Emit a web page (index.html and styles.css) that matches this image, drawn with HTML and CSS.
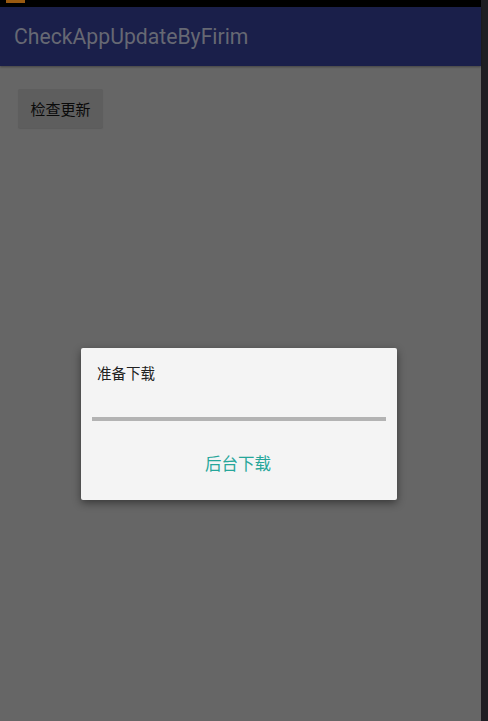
FILE: index.html
```html
<!DOCTYPE html>
<html>
<head>
<meta charset="utf-8">
<link rel="stylesheet" href="styles.css">
</head>
<body>
<div class="screen">
  <div class="app">
    <div class="statusbar"><span class="notif"></span></div>
    <div class="toolbar"><span class="title">CheckAppUpdateByFirim</span></div>
    <div class="content">
      <button class="btn">检查更新</button>
    </div>
    <div class="dialog">
      <div class="dlg-title">准备下载</div>
      <div class="progress"></div>
      <div class="dlg-actions"><span class="action">后台下载</span></div>
    </div>
  </div>
  <div class="edge"></div>
</div>
</body>
</html>
```
FILE: styles.css
```css
html, body { margin: 0; padding: 0; }
body { width: 488px; height: 721px; overflow: hidden; font-family: Roboto, "Noto Sans CJK SC", sans-serif; }
.screen { display: flex; width: 488px; height: 721px; }
.app { position: relative; flex: 1; background: #666666; display: flex; flex-direction: column; }
.edge { width: 7px; background: #1f1e23; }
.statusbar { height: 7px; background: #000; position: relative; }
.notif { position: absolute; left: 6px; top: 0; width: 19px; height: 3px; background: #9a5a10; }
.toolbar { height: 59px; background: #1a1f4a; display: flex; align-items: center; padding-left: 14px; box-shadow: 0 1px 2px rgba(0,0,0,0.35); }
.title { font-size: 21.2px; color: #666873; letter-spacing: 0; }
.content { padding: 23px 18px; }
.btn { width: 85px; height: 39px; background: #5e5e5e; border: none; border-radius: 2px; font-family: "Noto Sans CJK SC", sans-serif; font-size: 15px; color: #0a0a0a; padding: 0; box-shadow: 0 1px 1px rgba(0,0,0,0.1); }
.dialog { position: absolute; left: 81px; top: 348px; width: 316px; height: 152px; background: #f4f4f4; border-radius: 2px; box-shadow: 0 3px 8px rgba(0,0,0,0.45); box-sizing: border-box; padding: 15px 11px 0 11px; display: flex; flex-direction: column; }
.dlg-title { padding-left: 5px; font-family: "Noto Sans CJK SC", sans-serif; font-size: 14.5px; line-height: 20px; color: #222; }
.progress { margin-top: 34px; height: 4px; background: #b3b3b3; }
.dlg-actions { flex: 1; display: flex; justify-content: center; align-items: center; padding-top: 4px; }
.action { font-family: "Noto Sans CJK SC", sans-serif; font-size: 16.5px; color: #26a69a; margin-left: -2px; }
```
